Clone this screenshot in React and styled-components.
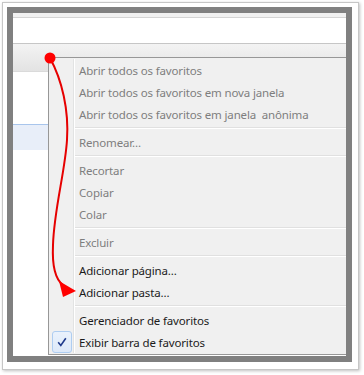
import React from "react";
import styled, { createGlobalStyle } from "styled-components";

const GlobalStyle = createGlobalStyle`
  html, body {
    margin: 0;
    padding: 0;
    background: #ffffff;
  }
  body {
    font-family: "Noto Sans", "Open Sans", sans-serif;
  }
`;

const Page = styled.div`
  position: relative;
  width: 364px;
  height: 375px;
  padding: 2px 0 0 2px;
  box-sizing: border-box;
`;

const Frame = styled.div`
  width: 357px;
  height: 368px;
  box-sizing: border-box;
  border: 1px solid #c6c6c6;
  padding: 4px 6px 7px 4px;
  background: #ffffff;
  box-shadow: 1px 1px 3px rgba(0, 0, 0, 0.25);
`;

const Screen = styled.div`
  position: relative;
  height: 100%;
  box-sizing: border-box;
  border: 6px solid #808080;
  background: #ffffff;
  overflow: hidden;
  display: flex;
  flex-direction: column;
`;

const TopStrip = styled.div`
  height: 4px;
  background: #f1f1f1;
  border-bottom: 1px solid #d4d4d4;
`;

const AddressArea = styled.div`
  height: 25px;
  background: #ffffff;
  border-bottom: 1px solid #c6c6c6;
`;

const BookmarkBar = styled.div`
  height: 27px;
  background: linear-gradient(#f3f3f3, #e3e3e3);
  border-bottom: 1px solid #dadada;
`;

const SideList = styled.div`
  flex: 1;
  display: flex;
  flex-direction: column;
  padding-top: 52px;
`;

const SideRow = styled.div`
  width: 36px;
  height: 25px;
  background: ${(p) => (p.$selected ? "#e8eef9" : "transparent")};
  border-top: 1px solid ${(p) => (p.$selected ? "#a8c5ec" : "transparent")};
`;

const Menu = styled.div`
  position: absolute;
  left: 35px;
  top: 44px;
  width: 320px;
  height: 298px;
  box-sizing: border-box;
  border: 1px solid #979797;
  background: #f0f0f0;
  padding: 1px 2px;
  display: flex;
  flex-direction: column;
`;

const Gutter = styled.div`
  position: absolute;
  left: 24px;
  top: 1px;
  bottom: 1px;
  width: 1px;
  background: #e2e3e3;
  border-right: 1px solid #ffffff;
`;

const Item = styled.div`
  position: relative;
  height: 22px;
  display: flex;
  align-items: center;
  padding-left: 28px;
  font-size: 11.5px;
  letter-spacing: -0.15px;
  white-space: pre;
  color: ${(p) => (p.$disabled ? "#7e7e7e" : "#1b1b1b")};
`;

const Separator = styled.div`
  height: 6px;
  margin-left: 23px;
  display: flex;
  flex-direction: column;
  justify-content: center;
  &::before {
    content: "";
    display: block;
    height: 1px;
    background: #e0e0e0;
    border-bottom: 1px solid #ffffff;
  }
`;

const CheckBox = styled.div`
  position: absolute;
  left: 1px;
  top: 0;
  width: 18px;
  height: 20px;
  border: 1px solid #aecdf1;
  border-radius: 3px;
  background: linear-gradient(#eaf2fc, #dde9f9);
  display: flex;
  align-items: center;
  justify-content: center;
`;

const Annotation = styled.svg`
  position: absolute;
  left: 0;
  top: 0;
  pointer-events: none;
`;

const sections = [
  [
    { label: "Abrir todos os favoritos", disabled: true },
    { label: "Abrir todos os favoritos em nova janela", disabled: true },
    { label: "Abrir todos os favoritos em janela  anônima", disabled: true },
  ],
  [{ label: "Renomear...", disabled: true }],
  [
    { label: "Recortar", disabled: true },
    { label: "Copiar", disabled: true },
    { label: "Colar", disabled: true },
  ],
  [{ label: "Excluir", disabled: true }],
  [{ label: "Adicionar página..." }, { label: "Adicionar pasta..." }],
  [
    { label: "Gerenciador de favoritos" },
    { label: "Exibir barra de favoritos", checked: true },
  ],
];

export default function App() {
  return (
    <>
      <GlobalStyle />
      <Page>
        <Frame>
          <Screen>
            <TopStrip />
            <AddressArea />
            <BookmarkBar />
            <SideList>
              <SideRow $selected />
            </SideList>
            <Menu>
              <Gutter />
              {sections.map((group, i) => (
                <React.Fragment key={i}>
                  {i > 0 && <Separator />}
                  {group.map((item) => (
                    <Item key={item.label} $disabled={item.disabled}>
                      {item.checked && (
                        <CheckBox>
                          <svg width="10" height="10" viewBox="0 0 10 10">
                            <path
                              d="M1.2 5.2 L3.8 8.4 L8.8 1.2"
                              fill="none"
                              stroke="#1f3a8c"
                              strokeWidth="1.6"
                            />
                          </svg>
                        </CheckBox>
                      )}
                      {item.label}
                    </Item>
                  ))}
                </React.Fragment>
              ))}
            </Menu>
          </Screen>
        </Frame>
        <Annotation width="364" height="375" viewBox="0 0 364 375">
          <path
            d="M50 58 C62 80 69 110 67 140 C65 172 54 210 53 245 C52 266 55 279 63 285"
            fill="none"
            stroke="#e60000"
            strokeWidth="2"
          />
          <polygon points="76,291 59,281 63,297" fill="#ff0000" />
          <circle cx="50" cy="58" r="5.5" fill="#ff0000" />
        </Annotation>
      </Page>
    </>
  );
}
